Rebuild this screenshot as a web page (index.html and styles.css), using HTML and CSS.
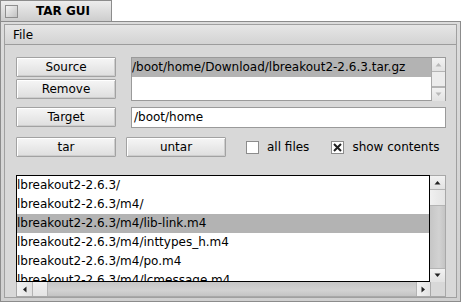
FILE: index.html
```html
<!DOCTYPE html>
<html>
<head>
<meta charset="utf-8">
<link rel="stylesheet" href="styles.css">
</head>
<body>
<div class="win">
  <div class="tab"><div class="close"></div><div class="title">TAR GUI</div></div>
  <div class="frame">
    <div class="inner">
      <div class="menubar"><span class="menu-item">File</span></div>
      <div class="content">
        <div class="row row-source">
          <div class="btn-col">
            <div class="btn">Source</div>
            <div class="btn">Remove</div>
          </div>
          <div class="scrollbox small">
            <div class="listview">
              <div class="item selected">/boot/home/Download/lbreakout2-2.6.3.tar.gz</div>
            </div>
            <div class="vscroll">
              <div class="sb-btn"><svg width="7" height="5" viewBox="0 0 7 5"><polygon points="0.5,4.5 3.5,1 6.5,4.5" fill="#b8b8b8"/></svg></div>
              <div class="thumb v"></div>
              <div class="sb-btn"><svg width="7" height="5" viewBox="0 0 7 5"><polygon points="0.5,0.5 3.5,4 6.5,0.5" fill="#b8b8b8"/></svg></div>
            </div>
          </div>
        </div>
        <div class="row row-target">
          <div class="btn">Target</div>
          <div class="field">/boot/home</div>
        </div>
        <div class="row row-actions">
          <div class="btn">tar</div>
          <div class="btn">untar</div>
          <label class="check first"><span class="box"></span>all files</label>
          <label class="check"><span class="box checked"><svg width="9" height="9" viewBox="0 0 9 9"><path d="M1 1 L8 8 M8 1 L1 8" stroke="#222" stroke-width="2"/></svg></span>show contents</label>
        </div>
        <div class="bigbox">
          <div class="listview big">
            <div class="item">lbreakout2-2.6.3/</div>
            <div class="item">lbreakout2-2.6.3/m4/</div>
            <div class="item selected">lbreakout2-2.6.3/m4/lib-link.m4</div>
            <div class="item">lbreakout2-2.6.3/m4/inttypes_h.m4</div>
            <div class="item">lbreakout2-2.6.3/m4/po.m4</div>
            <div class="item">lbreakout2-2.6.3/m4/lcmessage.m4</div>
          </div>
          <div class="vscroll">
            <div class="sb-btn"><svg width="7" height="5" viewBox="0 0 7 5"><polygon points="0.5,4.5 3.5,1 6.5,4.5" fill="#222"/></svg></div>
            <div class="thumb v"></div>
            <div class="track v"></div>
            <div class="sb-btn"><svg width="7" height="5" viewBox="0 0 7 5"><polygon points="0.5,0.5 3.5,4 6.5,0.5" fill="#222"/></svg></div>
          </div>
          <div class="hscroll">
            <div class="sb-btn h"><svg width="5" height="7" viewBox="0 0 5 7"><polygon points="4.5,0.5 1,3.5 4.5,6.5" fill="#222"/></svg></div>
            <div class="thumb h"></div>
            <div class="track h"></div>
            <div class="sb-btn h"><svg width="5" height="7" viewBox="0 0 5 7"><polygon points="0.5,0.5 4,3.5 0.5,6.5" fill="#222"/></svg></div>
          </div>
          <div class="corner"></div>
        </div>
      </div>
    </div>
  </div>
</div>
</body>
</html>
```

FILE: styles.css
```css
* { box-sizing: border-box; }
body {
  margin: 0;
  background: #fff;
  font-family: "DejaVu Sans", sans-serif;
  font-size: 12px;
  color: #000;
}
.win {
  width: 461px;
  height: 302px;
  display: flex;
  flex-direction: column;
}
.tab {
  flex: none;
  width: 112px;
  height: 21px;
  border: 1px solid #8c8c8c;
  border-bottom: none;
  background: linear-gradient(#ededed, #cdcdcd);
  display: flex;
  align-items: center;
  gap: 18px;
  padding-left: 4px;
}
.close {
  flex: none;
  width: 13px;
  height: 13px;
  border: 1px solid #8e8e8e;
  background: linear-gradient(135deg, #f4f4f4, #c2c2c2);
}
.title {
  font-weight: bold;
  white-space: nowrap;
}
.frame {
  flex: 1;
  min-height: 0;
  overflow: hidden;
  border: 1px solid #8c8c8c;
  background: linear-gradient(#dcdcdc, #d0d0d0);
  padding: 2px 3px 3px 3px;
}
.inner {
  height: 100%;
  border: 1px solid #a0a0a0;
  display: flex;
  flex-direction: column;
  background: #d8d8d8;
}
.menubar {
  flex: none;
  height: 20px;
  border-bottom: 1px solid #9c9c9c;
  background: linear-gradient(#e6e6e6, #d3d3d3);
  display: flex;
  align-items: center;
  padding-left: 8px;
}
.content {
  flex: 1;
  min-height: 0;
  padding: 12px 10px 0 11px;
  display: flex;
  flex-direction: column;
}
.row {
  flex: none;
  display: flex;
  align-items: flex-start;
}
.row-source { gap: 15px; }
.btn-col {
  display: flex;
  flex-direction: column;
  gap: 2px;
}
.btn {
  width: 100px;
  height: 20px;
  border: 1px solid #a2a2a2;
  border-radius: 1px;
  background: linear-gradient(#f6f6f6, #dedede);
  box-shadow: inset 1px 1px 0 #fff, inset -1px -1px 0 #cdcdcd;
  display: flex;
  align-items: center;
  justify-content: center;
  flex: none;
}
.scrollbox.small {
  width: 315px;
  height: 44px;
  border: 1px solid #9a9a9a;
  display: flex;
  background: #fff;
}
.listview {
  flex: 1;
  min-height: 0;
  background: #fff;
  overflow: hidden;
}
.item {
  height: 19px;
  line-height: 19px;
  white-space: nowrap;
  padding-left: 0;
}
.item.selected { background: #b3b3b3; }
.vscroll {
  width: 15px;
  display: flex;
  flex-direction: column;
  border-left: 1px solid #a8a8a8;
  background: #cbcbcb;
}
.scrollbox.small .vscroll { width: 14px; }
.sb-btn {
  height: 14px;
  flex: none;
  background: linear-gradient(#f2f2f2, #e2e2e2);
  border-bottom: 1px solid #b4b4b4;
  display: flex;
  align-items: center;
  justify-content: center;
}
.sb-btn:last-child { border-bottom: none; border-top: 1px solid #b4b4b4; }
.thumb.v {
  flex: 1;
  max-height: 16px;
  min-height: 15px;
  background: linear-gradient(90deg, #f0f0f0, #e4e4e4);
  border-bottom: 1px solid #b4b4b4;
}
.scrollbox.small .thumb.v { max-height: none; background: #ececec; }
.track.v {
  flex: 1;
  background: linear-gradient(90deg, #c6c6c6, #d2d2d2 60%, #c4c4c4);
}
.row-target {
  margin-top: 6px;
  gap: 15px;
}
.field {
  width: 315px;
  height: 21px;
  border: 1px solid #9a9a9a;
  background: #fff;
  padding-left: 2px;
  line-height: 19px;
}
.row-actions {
  margin-top: 9px;
  gap: 10px;
  align-items: center;
}
.check {
  display: flex;
  align-items: center;
  gap: 8px;
  margin-left: 12px;
}
.check.first { margin-left: 10px; }
.box {
  width: 13px;
  height: 13px;
  border: 1px solid #8c8c8c;
  background: #fff;
  display: flex;
  align-items: center;
  justify-content: center;
}
.bigbox {
  margin-top: 18px;
  flex: 1;
  min-height: 0;
  display: grid;
  grid-template-columns: 1fr 15px;
  grid-template-rows: minmax(0, 1fr) 14px;
  border-right: 1px solid #a8a8a8;
  border-bottom: 1px solid #a8a8a8;
}
.listview.big {
  border: 1px solid #000;
}
.bigbox .vscroll {
  border-left: none;
  border-top: 1px solid #a8a8a8;
  min-height: 0;
}
.hscroll {
  display: flex;
  border-left: 1px solid #a8a8a8;
  background: #cbcbcb;
}
.sb-btn.h {
  width: 16px;
  height: auto;
  border-bottom: none;
  border-right: 1px solid #b4b4b4;
  background: linear-gradient(90deg, #f2f2f2, #e2e2e2);
}
.sb-btn.h:last-child { border-top: none; border-right: none; border-left: 1px solid #b4b4b4; width: 14px; }
.thumb.h {
  width: 15px;
  background: linear-gradient(#f0f0f0, #e4e4e4);
  border-right: 1px solid #b4b4b4;
}
.track.h {
  flex: 1;
  background: linear-gradient(#c6c6c6, #d2d2d2 60%, #c4c4c4);
}
.corner {
  background: #d8d8d8;
  border-left: 1px solid #a8a8a8;
}
```
